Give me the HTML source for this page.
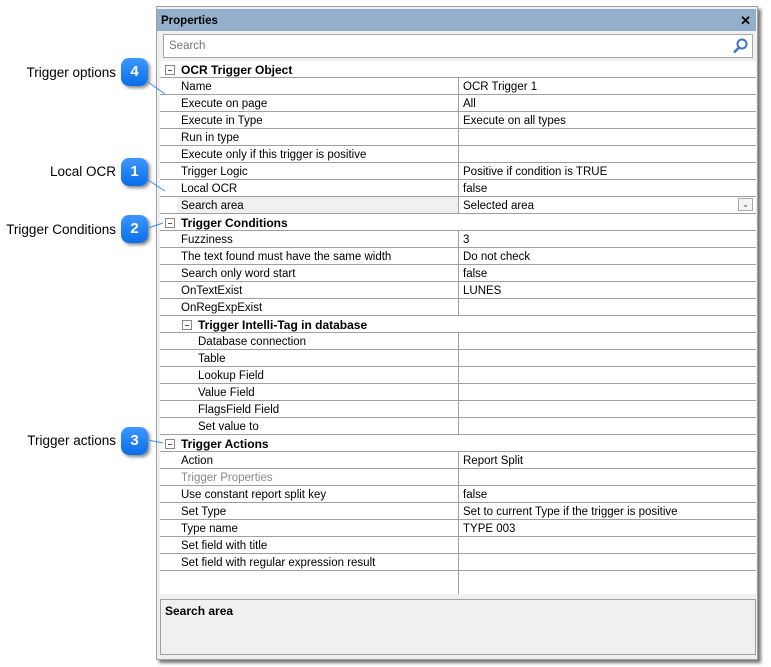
<!DOCTYPE html><html><head><style>
body{margin:0;width:771px;height:667px;background:#fff;position:relative;font-family:"Liberation Sans",sans-serif;font-size:11.5px;color:#000;overflow:hidden}
.a{position:absolute}
.win{left:156px;top:6px;width:600px;height:652px;background:#f0f0f0;border:1px solid #a0a0a0;box-shadow:3px 3px 3px #777}
.title{left:157px;top:9px;width:599px;height:22px;background:#94afcc;font-weight:bold;font-size:11.5px;line-height:24px}
.row{position:absolute;left:160px;width:596px;height:16px;border-bottom:1px solid #a0a0a0;background:#fff;line-height:19px}
.n{position:absolute;left:21px;white-space:nowrap}
.v{position:absolute;left:298px;top:0;height:17px;border-left:1px solid #a0a0a0;padding-left:4px;white-space:nowrap}
.h{font-weight:bold;font-size:12px}
.box{position:absolute;width:10px;height:10px;border:1px solid #888;top:4px;box-sizing:border-box}
.box:after{content:"";position:absolute;left:2px;top:4px;width:4px;height:1px;background:#555}
.b{position:absolute;width:27px;height:28px;border-radius:8px;background:linear-gradient(#3d97ff,#0a6ee8);color:#fff;font-weight:bold;font-size:15px;text-align:center;line-height:28px;box-shadow:2px 2px 3px #888}
.l{position:absolute;font-size:13.5px;text-align:right;width:116px;left:0;white-space:nowrap}
</style></head><body>
<div class="a win"></div>
<div class="a title"><span style="margin-left:4px">Properties</span><span style="position:absolute;right:5px;font-size:13px">✕</span></div>
<div class="a" style="left:163px;top:34px;width:588px;height:22px;background:#fff;border:1px solid #a8a8a8;color:#777;line-height:23px"><span style="margin-left:5px">Search</span>
<svg style="position:absolute;right:4px;top:3px" width="16" height="16"><circle cx="10" cy="6" r="4.5" stroke="#3a78c4" stroke-width="2" fill="none"/><line x1="7" y1="9.5" x2="2" y2="14.5" stroke="#3a78c4" stroke-width="2.5"/></svg></div>
<div class="a" style="left:160px;top:61px;width:596px;height:533px;background:#fff"></div>
<div id="g"></div>
<div class="a" style="left:160px;top:571px;width:596px;height:23px;background:#fff"><div style="position:absolute;left:298px;top:0;height:23px;border-left:1px solid #a0a0a0"></div></div>
<div class="a" style="left:160px;top:599px;width:594px;height:54px;border:1px solid #a0a0a0;background:#f0f0f0"><b style="position:absolute;left:4px;top:4px;font-size:12px">Search area</b></div>
<div class="l" style="top:65px">Trigger options</div>
<div class="l" style="top:164px">Local OCR</div>
<div class="l" style="top:222px">Trigger Conditions</div>
<div class="l" style="top:433px">Trigger actions</div>
<div class="b" style="left:121px;top:58px">4</div>
<div class="b" style="left:121px;top:158px">1</div>
<div class="b" style="left:121px;top:215px">2</div>
<div class="b" style="left:121px;top:427px">3</div>
<svg class="a" style="left:0;top:0" width="771" height="667"><g stroke="#3a8ee6" stroke-width="1"><line x1="148" y1="82" x2="165" y2="94"/><line x1="148" y1="180" x2="165" y2="191"/><line x1="148" y1="228" x2="163" y2="223"/><line x1="148" y1="440" x2="163" y2="443"/></g></svg>
<script>
var R=[["h","OCR Trigger Object",""],["","Name","OCR Trigger 1"],["","Execute on page","All"],["","Execute in Type","Execute on all types"],["","Run in type",""],["","Execute only if this trigger is positive",""],["","Trigger Logic","Positive if condition is TRUE"],["","Local OCR","false"],["s","Search area","Selected area"],["h","Trigger Conditions",""],["","Fuzziness","3"],["","The text found must have the same width","Do not check"],["","Search only word start","false"],["","OnTextExist","LUNES"],["","OnRegExpExist",""],["h2","Trigger Intelli-Tag in database",""],["i","Database connection",""],["i","Table",""],["i","Lookup Field",""],["i","Value Field",""],["i","FlagsField Field",""],["i","Set value to",""],["h","Trigger Actions",""],["","Action","Report Split"],["g","Trigger Properties",""],["","Use constant report split key","false"],["","Set Type","Set to current Type if the trigger is positive"],["","Type name","TYPE 003"],["","Set field with title",""],["","Set field with regular expression result",""]];
var h="";R.forEach(function(r,i){var t=61+17*i;h+='<div class="row" style="top:'+t+'px">';
if(r[0]=="h"||r[0]=="h2"){var x=r[0]=="h"?5:22;h+='<span class="box" style="left:'+x+'px"></span><span class="n h" style="left:'+(x+16)+'px">'+r[1]+'</span>';}
else{var x=r[0]=="i"?38:21;var st=r[0]=="g"?"color:#888;":"";var bg=r[0]=="s"?'<div style="position:absolute;left:17px;top:0;width:281px;height:16px;background:#f0f0f0"></div>':"";
h+=bg+'<span class="n" style="left:'+x+'px;'+st+'">'+r[1]+'</span><span class="v">'+r[2]+'</span>';
if(r[0]=="s")h+='<span style="position:absolute;right:3px;top:1px;width:15px;height:13px;border:1px solid #aaa;background:#f4f4f4;box-sizing:border-box;font-size:9px;line-height:11px;text-align:center;color:#555">&#8964;</span>';}
h+='</div>';});document.getElementById("g").innerHTML=h;
</script>
</body></html>
